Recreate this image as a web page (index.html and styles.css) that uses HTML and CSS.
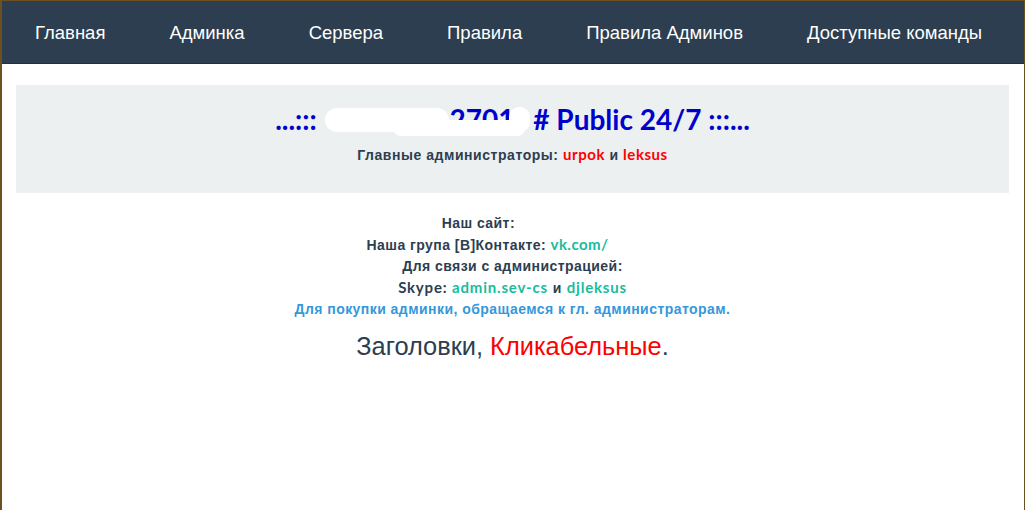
FILE: index.html
```html
<!DOCTYPE html>
<html lang="ru">
<head>
<meta charset="utf-8">
<title>Public 24/7</title>
<link rel="stylesheet" href="styles.css">
</head>
<body>
<div class="frame">
  <nav class="navbar">
    <a href="#">Главная</a>
    <a href="#">Админка</a>
    <a href="#">Сервера</a>
    <a href="#">Правила</a>
    <a href="#">Правила Админов</a>
    <a href="#">Доступные команды</a>
  </nav>
  <main class="container">
    <section class="jumbo">
      <h1 class="title"><span class="title-text">...::: <span class="hidden-name"></span>2701<span class="hidden-tail"></span> # Public 24/7 :::...<span class="blob blob-a"></span><span class="blob blob-b"></span><span class="blob blob-c"></span></span></h1>
      <p class="admins">Главные администраторы: <span class="lat red">urpok</span> и <span class="lat red">leksus</span></p>
    </section>
    <section class="info">
      <p>Наш сайт: <span class="pad-a"></span></p>
      <p>Наша група [В]Контакте: <a class="lat teal" href="#">vk.com/</a><span class="pad-b"></span></p>
      <p>Для связи с администрацией:</p>
      <p class="skype"><span class="lat">Skype:</span> <span class="lat teal">admin.sev-cs</span> и <span class="lat teal">djleksus</span></p>
      <p class="blue">Для покупки админки, обращаемся к гл. администраторам.</p>
    </section>
    <h2 class="headline">Заголовки, <span class="red">Кликабельные</span>.</h2>
  </main>
</div>
</body>
</html>
```

FILE: styles.css
```css
html, body {
  margin: 0;
  padding: 0;
  background: #ffffff;
}

.frame {
  box-sizing: border-box;
  min-height: 510px;
  border-top: 1px solid #6e4f1f;
  border-left: 2px solid #6e4f1f;
  border-right: 1px solid #6e4f1f;
  font-family: "Liberation Sans", Arial, sans-serif;
  color: #2c3e50;
}

.lat {
  font-family: Lato, "Liberation Sans", sans-serif;
  font-size: 15px;
}

.navbar {
  box-sizing: border-box;
  display: flex;
  align-items: center;
  height: 63px;
  padding: 2px 0 0 1px;
  background: #2c3e50;
  border-bottom: 1px solid #22303e;
}

.navbar a {
  padding: 0 32px;
  font-size: 18.5px;
  color: #ffffff;
  text-decoration: none;
}

.container {
  padding: 21px 15px 0 14px;
}

.jumbo {
  box-sizing: border-box;
  height: 108px;
  padding-top: 19px;
  background: #ecf0f1;
  text-align: center;
}

.title {
  margin: 0;
  font-family: Lato, sans-serif;
  font-weight: 700;
  font-size: 28px;
  line-height: 31px;
  color: #0000cd;
}

.title-text {
  position: relative;
  display: inline-block;
}

.hidden-name {
  display: inline-block;
  width: 126px;
}

.hidden-tail {
  display: inline-block;
  width: 12px;
}

.blob {
  position: absolute;
  background: #ffffff;
}

.blob-a {
  left: 50px;
  top: 4px;
  width: 124px;
  height: 24px;
  border-radius: 12px;
}

.blob-b {
  left: 118px;
  top: 16px;
  width: 132px;
  height: 16px;
  border-radius: 8px;
}

.blob-c {
  left: 234px;
  top: 3px;
  width: 21px;
  height: 25px;
  border-radius: 10px;
}

.admins {
  margin: 9px 0 0;
  font-size: 14px;
  font-weight: 700;
  line-height: 20px;
  letter-spacing: 0.55px;
}

.red {
  color: #ff0000;
}

.teal {
  color: #18bc9c;
  text-decoration: none;
}

.blue {
  color: #3498db;
}

.info {
  margin-top: 20px;
  text-align: center;
  font-size: 14px;
  font-weight: 700;
  line-height: 21px;
  letter-spacing: 0.45px;
}

.info p {
  margin: 0;
}

.info .skype {
  letter-spacing: 0.8px;
}

.pad-a {
  display: inline-block;
  width: 64px;
}

.pad-b {
  display: inline-block;
  width: 50px;
}

.headline {
  margin: 13px 0 0;
  text-align: center;
  font-weight: 400;
  font-size: 25.4px;
  line-height: 27px;
  color: #2c3e50;
}
```
